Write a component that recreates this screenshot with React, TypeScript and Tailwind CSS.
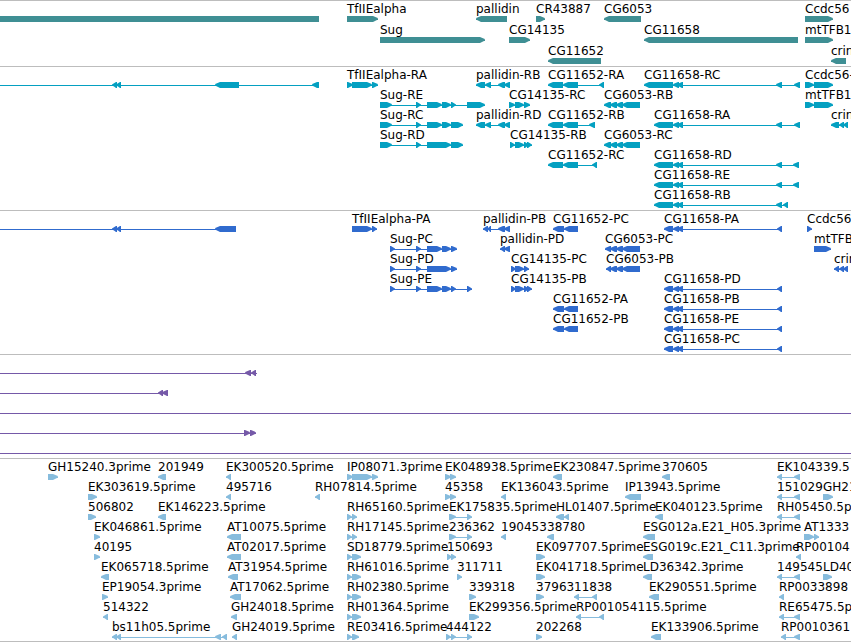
type Strand = '+' | '-'
type Block = [start: number, end: number]

interface Feature {
  label?: string
  strand: Strand
  blocks: Block[]
  // intron line, when it runs further than the blocks
  line?: [number, number | '100%']
}

interface TrackData {
  name: string
  color: string
  className: string
  rowClass: string
  rows: Feature[][]
}

const f = (label: string, strand: Strand, ...blocks: Block[]): Feature => ({ label, strand, blocks })

const SUG_HEAD: Block[] = [[380, 392], [416, 421]]
const SUG_EXONS: Block[] = [[427, 442], [442, 451]]
const PALLIDIN: Block[] = [[476, 485], [485, 491], [498, 505], [504, 510]]
const CG11652: Block[] = [[548, 563], [563, 578]]
const CG11652_CDS: Block[] = [[553, 564], [564, 578]]
const CG6053: Block[] = [[604, 611], [610, 617], [616, 623], [622, 640]]
const CG11658: Block[] = [[654, 673], [673, 679], [677, 683], [776, 782]]
const CG11658_CDS: Block[] = [[664, 673], [673, 679], [677, 683], [777, 782]]
const CCDC56: Block[] = [[805, 814], [814, 833]]
const EST_777: Block[] = [[777, 782], [794, 800]]
const EST_347: Block[] = [[347, 352], [352, 361]]

const tracks: TrackData[] = [
  {
    name: 'Genes',
    color: '#3f8f94',
    className: 'pb-0.5',
    rowClass: 'h-[21px]',
    rows: [
      [
        { strand: '-', blocks: [[-10, 319]] },
        f('TfIIEalpha', '+', [347, 378]),
        f('pallidin', '-', [476, 507]),
        f('CR43887', '+', [536, 545]),
        f('CG6053', '-', [604, 641]),
        f('Ccdc56', '+', [805, 833]),
      ],
      [
        f('Sug', '+', [380, 485]),
        f('CG14135', '+', [509, 530]),
        f('CG11658', '-', [644, 798]),
        f('mtTFB1', '+', [805, 833]),
      ],
      [f('CG11652', '-', [548, 601]), f('crin', '-', [831, 846])],
    ],
  },
  {
    name: 'Transcripts',
    color: '#04a0c1',
    className: 'pb-[3px]',
    rowClass: 'h-5',
    rows: [
      [
        { strand: '-', blocks: [[112, 117], [116, 121], [215, 239], [312, 319]], line: [0, 319] },
        f('TfIIEalpha-RA', '+', [347, 353], [352, 372], [372, 378]),
        f('pallidin-RB', '-', ...PALLIDIN),
        f('CG11652-RA', '-', ...CG11652, [599, 604]),
        f('CG11658-RC', '-', [644, 673], ...CG11658.slice(1), [794, 800]),
        f('Ccdc56-', '+', ...CCDC56),
      ],
      [
        f('Sug-RE', '+', ...SUG_HEAD, ...SUG_EXONS, [451, 456], [467, 485]),
        f('CG14135-RC', '+', [509, 515], [515, 524], [524, 530]),
        f('CG6053-RB', '-', ...CG6053),
        f('mtTFB1-', '+', ...CCDC56),
      ],
      [
        f('Sug-RC', '+', ...SUG_HEAD, ...SUG_EXONS, [451, 463]),
        f('pallidin-RD', '-', ...PALLIDIN),
        f('CG11652-RB', '-', ...CG11652, [589, 595]),
        f('CG11658-RA', '-', ...CG11658, [794, 800]),
        f('crin', '-', [831, 839], [839, 844], [843, 848]),
      ],
      [
        f('Sug-RD', '+', ...SUG_HEAD, [427, 451], [451, 463]),
        f('CG14135-RB', '+', [510, 515], [515, 524], [524, 529], [527, 532]),
        f('CG6053-RC', '-', ...CG6053),
      ],
      [f('CG11652-RC', '-', ...CG11652, [592, 597]), f('CG11658-RD', '-', ...CG11658, [793, 799])],
      [f('CG11658-RE', '-', ...CG11658, [793, 799])],
      [f('CG11658-RB', '-', ...CG11658, [783, 788])],
    ],
  },
  {
    name: 'Proteins',
    color: '#306bce',
    className: 'pb-[3px]',
    rowClass: 'h-5',
    rows: [
      [
        { strand: '-', blocks: [[112, 117], [116, 121], [215, 236]], line: [0, 236] },
        f('TfIIEalpha-PA', '+', [352, 372], [372, 377]),
        f('pallidin-PB', '-', [483, 488], [487, 491], [498, 505], [504, 510]),
        f('CG11652-PC', '-', ...CG11652_CDS),
        f('CG11658-PA', '-', ...CG11658_CDS),
        f('Ccdc56', '+', [807, 812]),
      ],
      [
        f('Sug-PC', '+', [390, 395], [416, 421], ...SUG_EXONS, [451, 457]),
        f('pallidin-PD', '-', [500, 505], [504, 510]),
        f('CG6053-PC', '-', [605, 611], ...CG6053.slice(1)),
        f('mtTFB', '+', [814, 831]),
      ],
      [
        f('Sug-PD', '+', [390, 395], [416, 421], [427, 451], [451, 457]),
        f('CG14135-PC', '+', [511, 516], [515, 524], [524, 529]),
        f('CG6053-PB', '-', [606, 611], ...CG6053.slice(1)),
        f('crin', '-', [834, 839], [839, 844], [843, 848]),
      ],
      [
        f('Sug-PE', '+', [390, 395], [416, 421], ...SUG_EXONS, [451, 456], [467, 472]),
        f('CG14135-PB', '+', [511, 516], [515, 524], [524, 529], [527, 532]),
        f('CG11658-PD', '-', ...CG11658_CDS),
      ],
      [f('CG11652-PA', '-', ...CG11652_CDS), f('CG11658-PB', '-', ...CG11658_CDS)],
      [f('CG11652-PB', '-', ...CG11652_CDS), f('CG11658-PE', '-', ...CG11658_CDS)],
      [f('CG11658-PC', '-', ...CG11658_CDS)],
    ],
  },
  {
    name: 'Predictions',
    color: '#7559a8',
    className: 'pb-[3px]',
    rowClass: 'h-5',
    rows: [
      [{ strand: '-', blocks: [[245, 251], [251, 256]], line: [0, 257] }],
      [{ strand: '-', blocks: [[158, 163], [162, 168]], line: [0, 168] }],
      [{ strand: '-', blocks: [], line: [0, '100%'] }],
      [{ strand: '+', blocks: [[244, 250], [250, 256]], line: [0, 256] }],
      [{ strand: '-', blocks: [], line: [0, '100%'] }],
    ],
  },
  {
    name: 'ESTs',
    color: '#87bcdd',
    className: 'border-b pb-0.5',
    rowClass: 'h-5',
    rows: [
      [
        f('GH15240.3prime', '+', [48, 58]),
        f('201949', '-', [158, 166]),
        f('EK300520.5prime', '-', [226, 231]),
        f('IP08071.3prime', '+', [347, 353], [352, 372], [372, 378]),
        f('EK048938.5prime', '+', [445, 451], [450, 456]),
        f('EK230847.5prime', '-', [553, 562]),
        f('370605', '-', [662, 670]),
        f('EK104339.5', '-', ...EST_777),
      ],
      [
        f('EK303619.5prime', '+', [88, 97]),
        f('495716', '-', [226, 231]),
        f('RH07814.5prime', '-', [315, 320]),
        f('45358', '+', [445, 451], [450, 456]),
        f('EK136043.5prime', '-', [501, 506]),
        f('IP13943.5prime', '-', [625, 641]),
        f('151029', '-', ...EST_777),
        f('GH21', '+', [823, 833]),
      ],
      [
        f('506802', '+', [88, 96]),
        f('EK146223.5prime', '-', [158, 166]),
        f('RH65160.5prime', '+', [347, 352], [352, 357]),
        f('EK175835.5prime', '+', [449, 456], [467, 472]),
        f('HL01407.5prime', '-', [556, 564], [564, 569]),
        f('EK040123.5prime', '-', [655, 663]),
        f('RH05450.5p', '-', ...EST_777),
      ],
      [
        f('EK046861.5prime', '+', [94, 100]),
        f('AT10075.5prime', '-', [227, 241]),
        f('RH17145.5prime', '+', [347, 352], [352, 357]),
        f('236362', '+', [449, 456], [467, 472]),
        f('190453', '-', [501, 506]),
        f('38780', '-', [547, 554]),
        f('ESG012a.E21_H05.3prime', '-', [643, 655]),
        f('AT1333', '+', [804, 814], [814, 819]),
      ],
      [
        f('40195', '+', [94, 100]),
        f('AT02017.5prime', '-', [227, 241]),
        f('SD18779.5prime', '+', ...EST_347),
        f('150693', '+', [447, 452], [451, 456]),
        f('EK097707.5prime', '+', [536, 545]),
        f('ESG019c.E21_C11.3prime', '-', [643, 653]),
        f('RP00104', '-', [796, 801]),
      ],
      [
        f('EK065718.5prime', '-', [101, 109]),
        f('AT31954.5prime', '-', [228, 238]),
        f('RH61016.5prime', '+', ...EST_347),
        f('311711', '+', [457, 462]),
        f('EK041718.5prime', '+', [536, 545]),
        f('LD36342.3prime', '-', [643, 652]),
        f('149545', '-', ...EST_777),
        f('LD40', '+', [823, 832]),
      ],
      [
        f('EP19054.3prime', '+', [102, 108]),
        f('AT17062.5prime', '-', [230, 241]),
        f('RH02380.5prime', '+', ...EST_347),
        f('339318', '+', [469, 476]),
        f('37963', '+', [536, 544]),
        f('11838', '-', [574, 579], [592, 597]),
        f('EK290551.5prime', '-', [649, 659]),
        f('RP0033898', '-', [779, 784]),
      ],
      [
        f('514322', '-', [103, 108]),
        f('GH24018.5prime', '-', [231, 237]),
        f('RH01364.5prime', '+', ...EST_347),
        f('EK299356.5prime', '+', [469, 479]),
        f('RP001054115.5prime', '-', [576, 581], [599, 604]),
        f('RE65475.5p', '-', [779, 784], [794, 800]),
      ],
      [
        f('bs11h05.5prime', '-', [112, 117], [116, 121], [215, 221], [222, 227]),
        f('GH24019.5prime', '-', [232, 237]),
        f('RE03416.5prime', '+', [347, 352], [352, 359]),
        f('444122', '+', [446, 451], [451, 456], [467, 472]),
        f('202268', '+', [536, 542]),
        f('EK133906.5prime', '-', [651, 661]),
        f('RP0010361', '-', [781, 786], [794, 800]),
      ],
    ],
  },
]

// Six pixels tall, with a slightly rounded point on the side the strand runs to
function blockPath([start, end]: Block, strand: Strand) {
  const [base, point, dir] = strand === '+' ? [start, end, 1] : [end, start, -1]
  const neck = point - dir * Math.min(5, end - start - 1)
  const mid = point - dir * 2
  return `M${base} 0H${neck}L${mid} 1.3L${point} 2.4V3.4L${mid} 4.6L${neck} 6H${base}Z`
}

function FeatureShape({ feature, color }: { feature: Feature; color: string }) {
  const { blocks, strand, line } = feature
  const from = line ? line[0] : blocks[0][0]
  const to = line ? line[1] : blocks[blocks.length - 1][1]
  return (
    <g fill={color}>
      <rect x={from} y={3} width={typeof to === 'number' ? to - from : to} height={1} />
      {blocks.map((block) => (
        <path key={block.join('-')} d={blockPath(block, strand)} />
      ))}
    </g>
  )
}

function TrackRow({ features, color, className }: { features: Feature[]; color: string; className: string }) {
  return (
    <div className={`relative flex flex-col ${className}`}>
      <svg className="mt-[15px] h-1.5 w-full shrink-0" aria-hidden="true">
        {features.map((feature, i) => (
          <FeatureShape key={i} feature={feature} color={color} />
        ))}
      </svg>
      {features.map(
        (feature) =>
          feature.label && (
            <span
              key={feature.label}
              className="absolute top-0 text-xs leading-4 whitespace-nowrap"
              style={{ left: feature.blocks[0][0] }}
            >
              {feature.label}
            </span>
          ),
      )}
    </div>
  )
}

function Track({ track }: { track: TrackData }) {
  return (
    <section aria-label={track.name} className={`border-t border-[#bdbdbd] ${track.className}`}>
      {track.rows.map((features, i) => (
        <TrackRow key={i} features={features} color={track.color} className={track.rowClass} />
      ))}
    </section>
  )
}

export default function App() {
  return (
    <main className="overflow-hidden bg-white font-['DejaVu_Sans',sans-serif] text-black">
      {tracks.map((track) => (
        <Track key={track.name} track={track} />
      ))}
    </main>
  )
}
